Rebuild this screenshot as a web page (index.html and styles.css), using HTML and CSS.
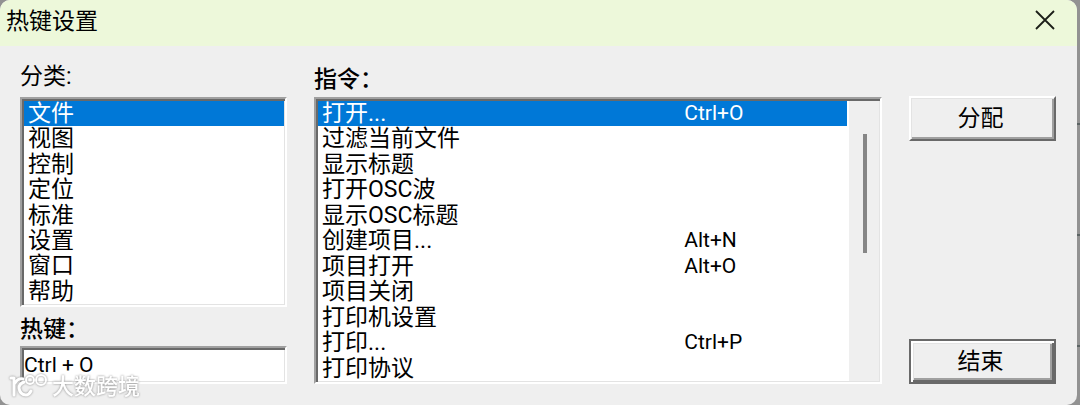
FILE: index.html
```html
<!DOCTYPE html>
<html lang="zh-CN">
<head>
<meta charset="utf-8">
<meta name="viewport" content="width=device-width, initial-scale=1">
<title>热键设置</title>
<link rel="stylesheet" href="styles.css">
</head>
<body>
<main class="dialog" role="dialog" aria-labelledby="title">
  <header class="titlebar">
    <h1 class="title" id="title">热键设置</h1>
    <button class="close" type="button" aria-label="关闭">
      <svg width="22" height="22" viewBox="0 0 22 22" aria-hidden="true"><path d="M2 1L20 19M20 1L2 19" fill="none" stroke="#1b1e18" stroke-width="1.8"/></svg>
    </button>
  </header>
  <div class="content">
    <section class="categories">
      <h2 class="label" id="cat-label">分类:</h2>
      <ul class="sunken list" role="listbox" aria-labelledby="cat-label">
        <li class="item selected" role="option" aria-selected="true">文件</li>
        <li class="item" role="option">视图</li>
        <li class="item" role="option">控制</li>
        <li class="item" role="option">定位</li>
        <li class="item" role="option">标准</li>
        <li class="item" role="option">设置</li>
        <li class="item" role="option">窗口</li>
        <li class="item" role="option">帮助</li>
      </ul>
      <label class="label strong hotkey-label" for="hotkey">热键：</label>
      <input class="sunken hotkey" id="hotkey" type="text" value="Ctrl + O">
    </section>
    <section class="commands">
      <h2 class="label strong" id="cmd-label">指令：</h2>
      <div class="sunken command-box">
        <ul class="list command-list" role="listbox" aria-labelledby="cmd-label">
          <li class="item selected" role="option" aria-selected="true"><span>打开...</span><kbd class="key">Ctrl+O</kbd></li>
          <li class="item" role="option"><span>过滤当前文件</span></li>
          <li class="item" role="option"><span>显示标题</span></li>
          <li class="item" role="option"><span>打开OSC波</span></li>
          <li class="item" role="option"><span>显示OSC标题</span></li>
          <li class="item" role="option"><span>创建项目...</span><kbd class="key">Alt+N</kbd></li>
          <li class="item" role="option"><span>项目打开</span><kbd class="key">Alt+O</kbd></li>
          <li class="item" role="option"><span>项目关闭</span></li>
          <li class="item" role="option"><span>打印机设置</span></li>
          <li class="item" role="option"><span>打印...</span><kbd class="key">Ctrl+P</kbd></li>
          <li class="item" role="option"><span>打印协议</span></li>
        </ul>
        <div class="scrollbar"><div class="thumb"></div></div>
      </div>
    </section>
    <div class="actions">
      <button class="button" type="button">分配</button>
      <button class="button default" type="button">结束</button>
    </div>
  </div>
  <div class="watermark">
    <svg width="40" height="26" viewBox="0 0 40 26" aria-hidden="true">
      <g fill="none" stroke="#fff" stroke-linecap="round" stroke-linejoin="round">
        <path d="M2 5H5V22" stroke-width="3"/>
        <path d="M6 10Q9 5 14 6" stroke-width="3"/>
        <path d="M15 9Q10 11 10 15Q11 22 17 22Q20 22 22 18" stroke-width="3"/>
        <circle cx="21" cy="7" r="4" stroke-width="2"/>
        <circle cx="32" cy="7" r="5" stroke-width="2"/>
      </g>
    </svg>
    <span>大数跨境</span>
  </div>
</main>
</body>
</html>
```
FILE: styles.css
```css
* { box-sizing: border-box; }

body {
  margin: 0;
  min-height: 100vh;
  padding-right: 3px;
  display: flex;
  background: repeating-linear-gradient(#929292 0 109px, #5c6464 109px 111px) 0 14px;
  color: #000;
  font: 23px/25px Roboto, "Noto Sans CJK SC", sans-serif;
}

.dialog {
  position: relative;
  flex: 1;
  display: flex;
  flex-direction: column;
  overflow: hidden;
  background: #efefef;
  border-radius: 10px;
}

.titlebar {
  display: flex;
  align-items: center;
  justify-content: space-between;
  height: 46px;
  padding: 0 21px 4px 6px;
  background: #edf8da;
}

.title {
  margin: 0;
  font-size: 23px;
  font-weight: 400;
}

.close {
  display: flex;
  padding: 0;
  border: 0;
  background: none;
}

.content {
  flex: 1;
  display: grid;
  grid-template-columns: 267px 1fr 147px;
  column-gap: 27px;
  padding: 18px 21px 21px 20px;
}

.categories,
.commands {
  display: flex;
  flex-direction: column;
}

.label {
  margin: 0;
  padding-bottom: 8px;
  font-size: 23px;
  font-weight: 400;
}

.commands .label {
  padding-top: 3px;
  padding-bottom: 5px;
}

.strong { font-weight: 500; }

.sunken {
  background: #fff;
  border: 2px solid;
  border-color: #a0a0a0 #fff #fff #a0a0a0;
  box-shadow: inset 2px 2px #696969, inset -1px -1px #e3e3e3;
}

.list {
  display: flex;
  flex-direction: column;
  margin: 0;
  padding: 2px 1px 1px 2px;
  list-style: none;
}

.categories .list {
  flex: 1;
}

.item {
  flex: 1;
  padding-left: 4px;
  white-space: nowrap;
}

.selected {
  background: #0078d7;
  color: #fff;
}

.hotkey-label {
  padding: 10px 0 4px;
}

.hotkey {
  width: 100%;
  height: 38px;
  padding: 0 2px;
  border-radius: 0;
  color: #000;
  font-family: Roboto, sans-serif;
  font-size: 21px;
}

.command-box {
  flex: 1;
  display: flex;
  padding: 2px 1px 1px 2px;
}

.command-list {
  flex: 1;
  padding: 0;
}

.command-list .item {
  display: grid;
  grid-template-columns: 69% 1fr;
}

.key {
  font-family: Roboto, sans-serif;
  font-size: 21px;
}

.scrollbar {
  width: 32px;
  padding: 33px 0 0 14px;
  border-left: 2px solid #fff;
  background: #efefef;
}

.thumb {
  width: 4px;
  height: 119px;
  background: #868686;
}

.actions {
  display: flex;
  flex-direction: column;
  justify-content: space-between;
  padding-top: 32px;
}

.button {
  height: 45px;
  padding: 0 4px 0 0;
  border: 2px solid;
  border-color: #fff #696969 #696969 #fff;
  border-radius: 0;
  background: #efefef;
  box-shadow: inset 1px 1px #e3e3e3, inset -2px -2px #a0a0a0;
  color: #000;
  font: inherit;
}

.default {
  border-color: #696969;
  box-shadow: inset 2px 2px #fff, inset -2px -2px #696969, inset 3px 3px #e3e3e3, inset -4px -4px #a0a0a0;
}

.watermark {
  position: absolute;
  left: 9px;
  bottom: 6px;
  display: flex;
  align-items: center;
  gap: 3px;
  color: #fff;
  font-size: 22px;
  font-weight: 500;
  filter: drop-shadow(0 0 1px #888);
  pointer-events: none;
}
```
